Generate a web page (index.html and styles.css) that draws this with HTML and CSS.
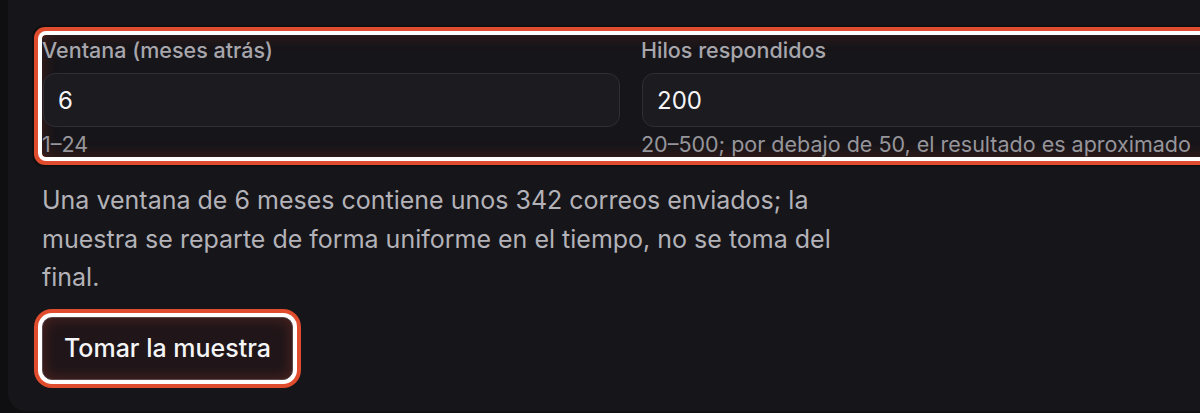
FILE: index.html
```html
<!DOCTYPE html>
<html lang="es">
<head>
<meta charset="utf-8">
<title>Tomar la muestra</title>
<link rel="stylesheet" href="styles.css">
</head>
<body>
  <section class="card">
    <div class="fields">
      <div class="field">
        <label class="label" for="ventana">Ventana (meses atrás)</label>
        <input class="input" id="ventana" type="text" value="6">
        <div class="hint">1–24</div>
      </div>
      <div class="field">
        <label class="label" for="hilos">Hilos respondidos</label>
        <input class="input" id="hilos" type="text" value="200">
        <div class="hint">20–500; por debajo de 50, el resultado es aproximado</div>
      </div>
    </div>
    <p class="note">Una ventana de 6 meses contiene unos 342 correos enviados; la muestra se reparte de forma uniforme en el tiempo, no se toma del final.</p>
    <button class="btn" type="button">Tomar la muestra</button>
  </section>
</body>
</html>
```

FILE: styles.css
```css
html, body {
  margin: 0;
  padding: 0;
  background: #0f0f11;
  overflow: hidden;
}
body {
  padding-left: 8px;
  font-family: Inter, "Noto Sans", "Liberation Sans", sans-serif;
  height: 413px;
}
.card {
  box-sizing: border-box;
  width: 1245px;
  background: #161519;
  border-radius: 0 0 18px 18px;
  padding: 35px 34px 31px 34px;
}
.fields {
  display: grid;
  grid-template-columns: 1fr 1fr;
  column-gap: 21px;
  border-radius: 4px;
  box-shadow:
    inset 0 0 16px rgba(190, 60, 40, 0.3),
    0 0 0 4px #ffffff,
    0 0 0 8px #e04c2e,
    0 0 0 10px rgba(0, 0, 0, 0.25);
}
.field {
  display: flex;
  flex-direction: column;
}
.label {
  font-size: 21.5px;
  line-height: 30px;
  font-weight: 500;
  color: #a7a6ac;
  margin-bottom: 8px;
  white-space: nowrap;
}
.input {
  box-sizing: border-box;
  height: 54px;
  margin: 0 0 0 1px;
  padding: 0 14px;
  border: 1px solid #2f2e35;
  border-radius: 12px;
  background: #1c1b20;
  color: #f4f4f6;
  font-family: inherit;
  font-size: 24px;
  outline: none;
}
.hint {
  margin-top: 5px;
  font-size: 21.5px;
  line-height: 25px;
  color: #96959b;
  white-space: nowrap;
}
.note {
  margin: 24px 0 20px 0;
  max-width: 830px;
  font-size: 25px;
  line-height: 38.5px;
  color: #b3b2b8;
}
.btn {
  box-sizing: border-box;
  display: inline-block;
  height: 63px;
  padding: 0 21px;
  border: 1px solid #5a4649;
  border-radius: 10px;
  background: #201619;
  color: #f5f5f7;
  font-family: inherit;
  font-size: 25px;
  font-weight: 500;
  line-height: 30px;
  box-shadow:
    inset 0 0 14px rgba(200, 70, 50, 0.3),
    0 0 0 4px #ffffff,
    0 0 0 8px #e04c2e;
}
```
